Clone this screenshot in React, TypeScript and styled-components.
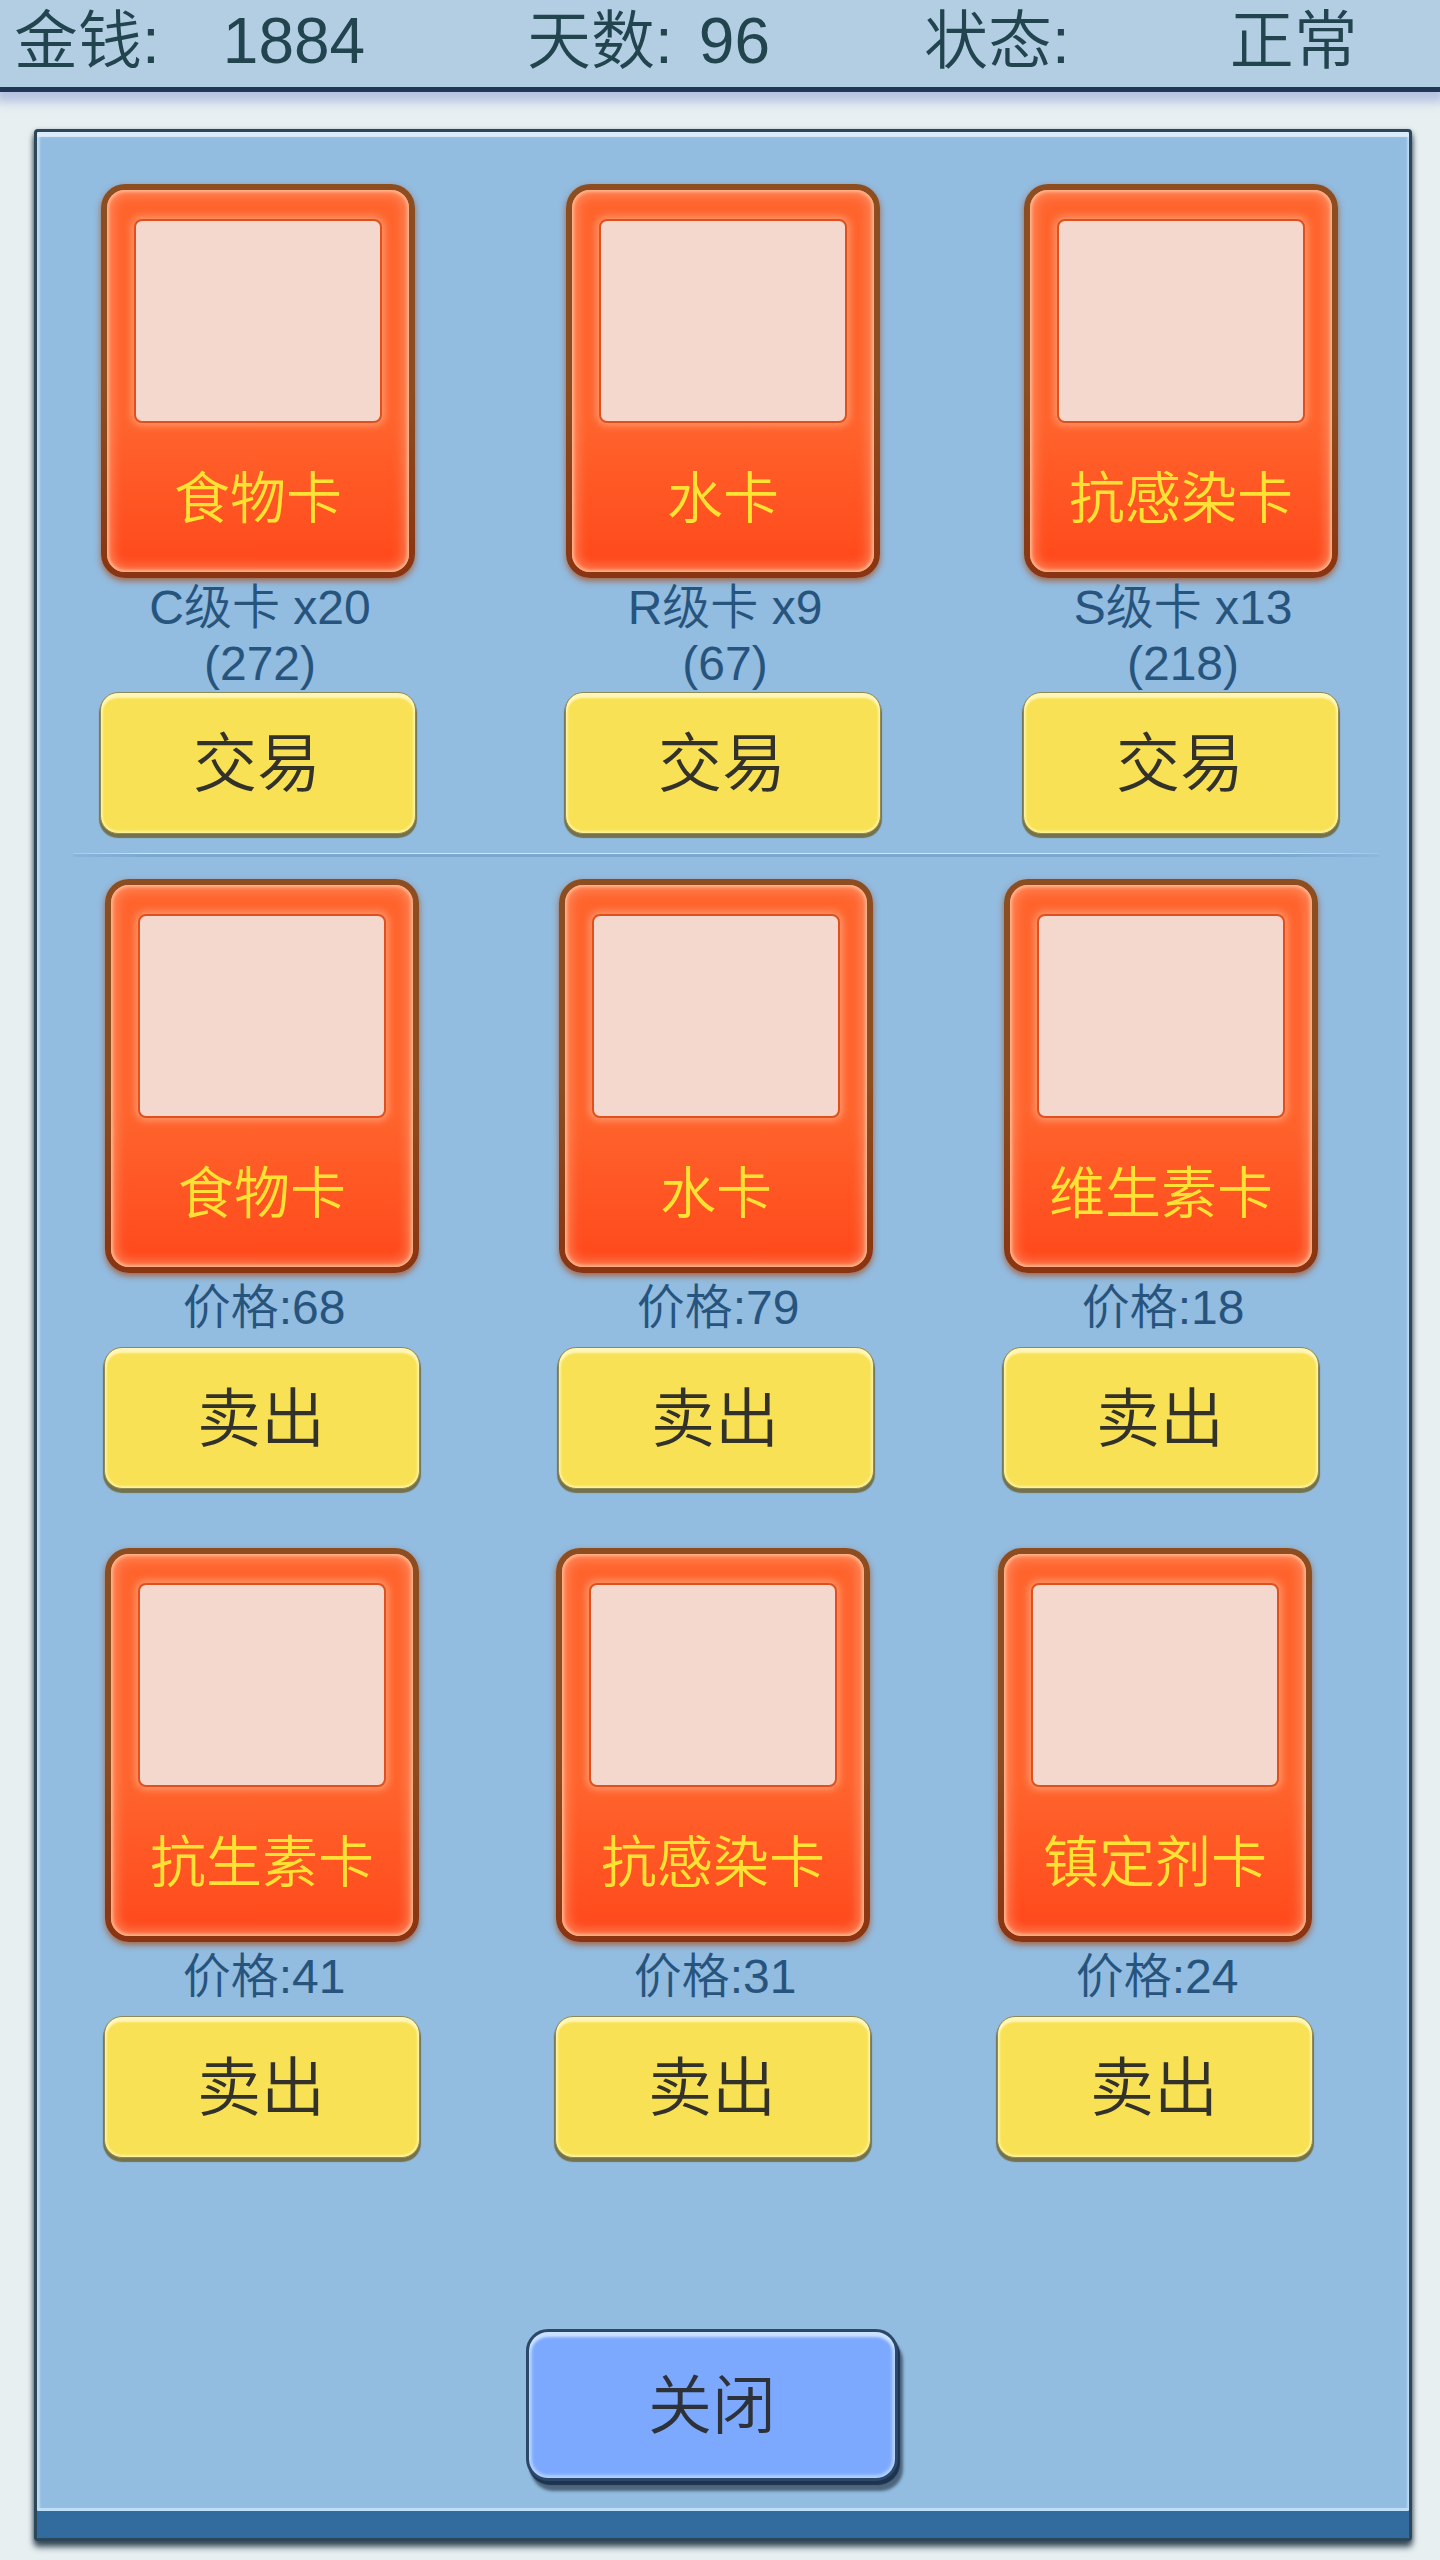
import React from "react";
import styled, { createGlobalStyle } from "styled-components";

const GlobalStyle = createGlobalStyle`
  *, *::before, *::after { box-sizing: border-box; }
  body {
    margin: 0;
    background: #e7eff1;
    font-family: "Liberation Sans", "Noto Sans CJK SC", sans-serif;
    font-weight: 350;
  }
  h2, p, dl, dt, dd { margin: 0; font-weight: inherit; }
`;

const Screen = styled.div`
  display: flex;
  flex-direction: column;
  min-height: 100vh;
`;

const StatusBar = styled.dl`
  display: grid;
  grid-template-columns: 513fr 397fr 516fr;
  height: 92px;
  padding: 0 0 6px 14px;
  background: #b3cee2;
  border-bottom: 5px solid #203656;
  box-shadow: 0 6px 9px 4px rgba(150, 165, 215, 0.6);
  color: #21444f;
  font-size: 64px;
  line-height: 82px;
`;

const Stat = styled.div<{ $gap: number }>`
  display: flex;
  gap: ${(p) => p.$gap}px;
`;

const Panel = styled.main`
  display: flex;
  flex: 1;
  flex-direction: column;
  margin: 37px 28px 19px 34px;
  padding: 52px 0 18px;
  border: 3px solid #2c475a;
  border-radius: 4px;
  background: #92bce0;
  box-shadow:
    0 6px 6px rgba(30, 50, 65, 0.8),
    0 2px 5px rgba(30, 50, 65, 0.5),
    inset 0 -27px 0 #326c9f,
    inset 0 -30px 1px #bfe0f7,
    inset 0 5px 1px #dcebfa,
    inset 3px 0 2px #bcdaf2,
    inset -2px 0 2px #bcdaf2;
`;

const Row = styled.section<{ $columns: string; $inset: number }>`
  display: grid;
  grid-template-columns: ${(p) => p.$columns};
  padding-left: ${(p) => p.$inset}px;
`;

const Slot = styled.article`
  display: flex;
  flex-direction: column;
  align-items: center;
  width: 320px;
`;

const Card = styled.div`
  display: flex;
  flex-direction: column;
  align-items: center;
  width: 314px;
  height: 394px;
  padding: 29px;
  border: 6px solid transparent;
  border-radius: 24px;
  background:
    linear-gradient(#ff642d 0%, #ff642d 60%, #ff481b 100%) padding-box,
    linear-gradient(#8c4e20 0%, #8c4e20 50%, #8a3411 100%) border-box;
  box-shadow:
    0 3px 6px rgba(170, 80, 35, 0.8),
    inset 0 0 3px 2px #ffb48c,
    inset 0 0 12px 5px rgba(255, 150, 110, 0.8);
`;

const Picture = styled.div`
  width: 248px;
  height: 204px;
  border: 2px solid #e0501f;
  border-radius: 8px;
  background: #f5d8cd;
  box-shadow: 0 0 7px 3px #ff9467;
`;

const CardName = styled.h2`
  color: #ffe234;
  font-size: 56px;
  line-height: 64px;
  margin-top: 44px;
  white-space: nowrap;
`;

const Info = styled.p`
  padding: 2px 0 0 4px;
  color: #27547d;
  font-size: 48px;
  line-height: 56px;
  text-align: center;
  white-space: pre-line;
`;

const GoldButton = styled.button<{ $space: number }>`
  width: 316px;
  height: 142px;
  margin: ${(p) => p.$space}px 0 4px;
  padding: 2px 2px 0 0;
  border: 1px solid #8c8a58;
  border-radius: 18px;
  background: #f8e154;
  box-shadow:
    0 3px 1px 1px #74724c,
    inset 0 5px 2px #fff6b8,
    inset 0 0 2px 2px #fff29a;
  color: #32322a;
  font: inherit;
  font-size: 64px;
  line-height: 76px;
`;

const Divider = styled.hr`
  width: 1306px;
  max-width: 100%;
  height: 4px;
  margin: 15px 0 22px 36px;
  border: 0;
  background: linear-gradient(#cfe6f8 0 1px, #7ba7cf 1px 4px);
  mask-image: linear-gradient(90deg, rgba(0, 0, 0, 0.3), #000 6%, #000 92%, rgba(0, 0, 0, 0.2));
`;

const CloseButton = styled.button`
  width: 372px;
  height: 152px;
  margin: auto auto 39px 489px;
  padding: 0 0 10px;
  border: 3px solid #2c4868;
  border-radius: 22px;
  background: #7ca9fe;
  box-shadow:
    2px 4px 1px #1d3350,
    5px 10px 3px rgba(60, 80, 100, 0.8),
    inset 0 5px 3px #cbe1ff,
    inset 0 0 3px 3px #b0d0ff;
  color: #2d3238;
  font: inherit;
  font-size: 64px;
`;

type Item = { name: string; info: string };

const trades: Item[] = [
  { name: "食物卡", info: "C级卡 x20\n(272)" },
  { name: "水卡", info: "R级卡 x9\n(67)" },
  { name: "抗感染卡", info: "S级卡 x13\n(218)" },
];

const sales: Item[][] = [
  [
    { name: "食物卡", info: "价格:68" },
    { name: "水卡", info: "价格:79" },
    { name: "维生素卡", info: "价格:18" },
  ],
  [
    { name: "抗生素卡", info: "价格:41" },
    { name: "抗感染卡", info: "价格:31" },
    { name: "镇定剂卡", info: "价格:24" },
  ],
];

const saleColumns = ["454fr 445fr 408fr", "451fr 442fr 414fr"];

function Offer({ item, action, space }: { item: Item; action: string; space: number }) {
  return (
    <Slot>
      <Card>
        <Picture />
        <CardName>{item.name}</CardName>
      </Card>
      <Info>{item.info}</Info>
      <GoldButton type="button" $space={space}>{action}</GoldButton>
    </Slot>
  );
}

const SaleRow = styled(Row)`
  & + & { margin-top: 55px; }
  ${Info} { padding-top: 7px; }
`;

export default function App() {
  return (
    <Screen>
      <GlobalStyle />
      <StatusBar>
        <Stat $gap={63}><dt>金钱:</dt><dd>1884</dd></Stat>
        <Stat $gap={26}><dt>天数:</dt><dd>96</dd></Stat>
        <Stat $gap={160}><dt>状态:</dt><dd>正常</dd></Stat>
      </StatusBar>
      <Panel>
        <Row $columns="465fr 458fr 388fr" $inset={61}>
          {trades.map((item) => (
            <Offer key={item.name} item={item} action="交易" space={0} />
          ))}
        </Row>
        <Divider />
        {sales.map((row, i) => (
          <SaleRow key={i} $columns={saleColumns[i]} $inset={65}>
            {row.map((item) => (
              <Offer key={item.name} item={item} action="卖出" space={11} />
            ))}
          </SaleRow>
        ))}
        <CloseButton type="button">关闭</CloseButton>
      </Panel>
    </Screen>
  );
}
